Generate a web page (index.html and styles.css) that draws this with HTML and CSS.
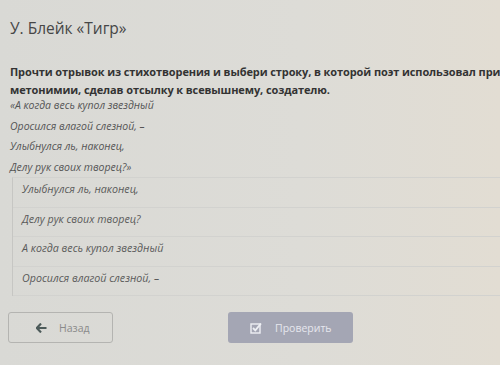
FILE: index.html
```html
<!DOCTYPE html>
<html lang="ru">
<head>
    <meta charset="UTF-8">
    <title>У. Блейк «Тигр»</title>
    <link rel="stylesheet" href="styles.css">
</head>
<body>
    <div class="page">
        <h1 class="title">У. Блейк «Тигр»</h1>
        <div class="task">
            <p class="question">Прочти отрывок из стихотворения и выбери строку, в которой поэт использовал приём метонимии, сделав отсылку к всевышнему, создателю.</p>
            <div class="poem">
                <p>«А когда весь купол звездный</p>
                <p>Оросился влагой слезной, –</p>
                <p>Улыбнулся ль, наконец,</p>
                <p>Делу рук своих творец?»</p>
            </div>
            <ul class="options">
                <li>Улыбнулся ль, наконец,</li>
                <li>Делу рук своих творец?</li>
                <li>А когда весь купол звездный</li>
                <li>Оросился влагой слезной, –</li>
            </ul>
        </div>
        <div class="actions">
            <button class="btn btn-back">
                <svg width="11" height="10" viewBox="0 0 11 10"><path d="M5 0.6 L0.9 5 L5 9.4 M1 5 H10.5" fill="none" stroke="#4d5b5a" stroke-width="2.2"/></svg>
                <span>Назад</span>
            </button>
            <button class="btn btn-check">
                <svg width="12" height="12" viewBox="0 0 12 12"><rect x="1" y="2" width="9" height="9" fill="none" stroke="#eef0f4" stroke-width="1.4"/><path d="M3 6 L5.3 8.3 L11 1.5" fill="none" stroke="#eef0f4" stroke-width="1.8"/></svg>
                <span>Проверить</span>
            </button>
        </div>
    </div>
</body>
</html>
```

FILE: styles.css
```css
html, body {
    margin: 0;
    height: 100%;
    overflow: hidden;
}
body {
    font-family: "Open Sans", "Liberation Sans", sans-serif;
    background: linear-gradient(90deg, #d9d9d5 0%, #dddcd7 60%, #e2ddd3 100%);
    color: #3b3b3b;
}
.page {
    width: 510px;
    padding: 0 10px;
}
.title {
    margin: 0;
    padding-top: 16px;
    font-size: 15.5px;
    font-weight: 400;
    color: #464646;
    line-height: 24px;
}
.task {
    margin-top: 23px;
}
.question {
    margin: 0;
    font-size: 11px;
    font-weight: 700;
    line-height: 18px;
    letter-spacing: -0.1px;
    color: #333;
}
.poem {
    margin-top: -4px;
}
.poem p {
    margin: 0;
    font-size: 10.5px;
    font-style: italic;
    line-height: 20.5px;
    color: #555;
}
.options {
    list-style: none;
    margin: 0 0 0 2px;
    padding: 0;
    border-left: 1px solid #c6c6c3;
    border-top: 1px solid #d2d2cf;
}
.options li {
    padding: 0 0 0 9px;
    height: 28.5px;
    line-height: 22px;
    font-size: 10.7px;
    font-style: italic;
    color: #5a5a5a;
    border-bottom: 1px solid #d2d2cf;
}
.actions {
    display: flex;
    gap: 115px;
    margin-top: 16px;
    margin-left: -2px;
}
.btn {
    display: flex;
    align-items: center;
    height: 31px;
    border-radius: 3px;
    font-family: inherit;
    font-size: 10.5px;
}
.btn-back {
    width: 105px;
    padding: 0 0 0 27px;
    gap: 12px;
    background: transparent;
    border: 1px solid #b4b4b1;
    color: #8a8a8a;
}
.btn-check {
    width: 125px;
    padding: 0 0 0 22px;
    gap: 13px;
    background: #a4a6b4;
    border: none;
    color: #e6e7ee;
}
```
